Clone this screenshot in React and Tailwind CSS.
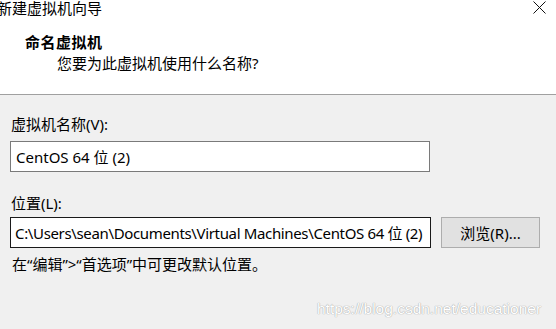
import React from "react";

export default function App() {
  const font = { fontFamily: '"Noto Sans", "Noto Sans CJK SC", sans-serif' };
  return (
    <div
      className="w-[556px] h-[329px] overflow-hidden bg-[#f0f0f0] text-[15px] text-black flex flex-col relative"
      style={font}
    >
      <div className="h-[95px] bg-white border-b border-[#a0a0a0] flex flex-col shrink-0">
        <div className="h-[16px] flex items-center justify-between">
          <span className="ml-[-3px] leading-[16px] text-[15px]">新建虚拟机向导</span>
          <svg width="13" height="13" viewBox="0 0 13 13" className="mr-[10px] mt-[-1px]">
            <path d="M0.5 0.5 L12.5 12.5 M12.5 0.5 L0.5 12.5" stroke="#111" strokeWidth="1" fill="none" />
          </svg>
        </div>
        <div className="ml-[25px] mt-[16px] leading-[20px] font-bold tracking-[0.5px]">命名虚拟机</div>
        <div className="ml-[57px] mt-[1px] leading-[20px]">您要为此虚拟机使用什么名称?</div>
      </div>
      <div className="flex flex-col pl-[10px] pt-[19px]">
        <div className="leading-[20px] ml-[1px]">虚拟机名称(V):</div>
        <div className="mt-[7px] w-[420px] h-[31px] bg-white border border-[#7a7a7a] flex items-center pl-[5px] leading-[20px]">
          CentOS 64 位 (2)
        </div>
        <div className="mt-[21px] leading-[20px] ml-[1px]">位置(L):</div>
        <div className="mt-[4px] flex gap-[10px]">
          <div className="w-[421px] h-[31px] bg-white border border-[#1a1a1a] flex items-center pl-[4px] leading-[20px] whitespace-nowrap overflow-hidden tracking-[-0.35px]">
            C:\Users\sean\Documents\Virtual Machines\CentOS 64 位 (2)
          </div>
          <div className="w-[99px] h-[31px] bg-[#e1e1e1] border border-[#adadad] flex items-center justify-center leading-[20px]">
            浏览(R)...
          </div>
        </div>
        <div className="mt-[6px] leading-[20px] ml-[2px]">在“编辑”&gt;“首选项”中可更改默认位置。</div>
      </div>
      <div
        className="absolute left-[317px] top-[299px] text-[15.5px] leading-[20px] whitespace-nowrap text-white [text-shadow:0_0_1px_#9e9e9e,0_0_1px_#b0b0b0]"
        style={{ fontFamily: '"Liberation Sans", Arial, sans-serif' }}
      >
        https://blog.csdn.net/educationer
      </div>
    </div>
  );
}
